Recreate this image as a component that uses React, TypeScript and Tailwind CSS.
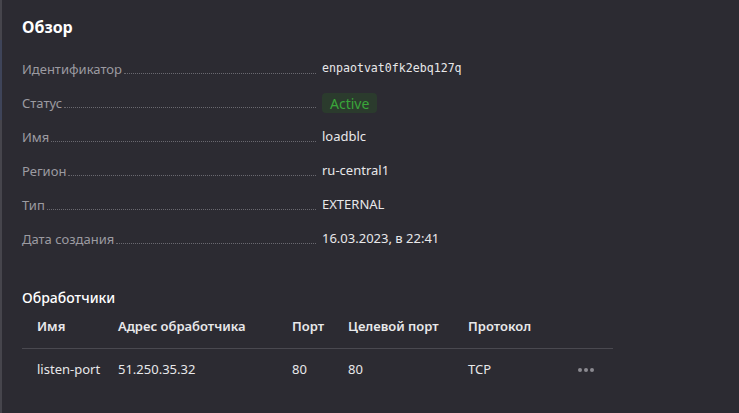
import React from "react";

const rows: { label: string; value: React.ReactNode }[] = [
  {
    label: "Идентификатор",
    value: (
      <span className="font-['DejaVu_Sans_Mono',monospace] text-[11.6px] text-[#e8e8ea]">
        enpaotvat0fk2ebq127q
      </span>
    ),
  },
  {
    label: "Статус",
    value: (
      <span className="inline-flex h-[20px] items-center rounded-[4px] bg-[#2b3b2d] px-[8px] text-[14px] text-[#3aa63a]">
        Active
      </span>
    ),
  },
  { label: "Имя", value: "loadblc" },
  { label: "Регион", value: "ru-central1" },
  { label: "Тип", value: "EXTERNAL" },
  { label: "Дата создания", value: "16.03.2023, в 22:41" },
];

const cols = ["w-[81px]", "w-[174px]", "w-[56px]", "w-[120px]", "w-[100px]"];

export default function App() {
  return (
    <div className="flex h-[413px] w-[739px] bg-[#2c2b32] font-['Noto_Sans',sans-serif] text-[13px] text-[#e8e8ea]">
      {/* left edge */}
      <div className="flex w-[2px] flex-col bg-[#46454c]">
        <div className="h-[40px]" />
        <div className="h-[80px] bg-[#3e4459]" />
      </div>

      <div className="flex-1 pl-[20px] pt-[14px]">
        <h2 className="text-[16px] font-bold leading-[26px] text-white">Обзор</h2>

        <div className="mt-[19px] flex flex-col">
          {rows.map((r) => (
            <div key={r.label} className="flex h-[34px] items-start">
              <div className="flex w-[296px] items-baseline leading-[20px]">
                <span className="text-[#9c9ba1]">{r.label}</span>
                <span className="mx-[2px] flex-1 border-b border-dotted border-[#6a6970]" />
              </div>
              <div className="ml-[4px] flex h-[20px] items-center">{r.value}</div>
            </div>
          ))}
        </div>

        <h3 className="mt-[25px] text-[14px] font-medium leading-[20px] text-white">Обработчики</h3>

        <div className="mt-[9px] w-[591px]">
          <div className="flex h-[32px] items-start border-b border-[#4a4950] pl-[15px] font-semibold leading-[18px]">
            {["Имя", "Адрес обработчика", "Порт", "Целевой порт", "Протокол"].map((h, i) => (
              <div key={h} className={cols[i]}>
                {h}
              </div>
            ))}
          </div>
          <div className="flex h-[42px] items-center pl-[15px]">
            {["listen-port", "51.250.35.32", "80", "80", "TCP"].map((c, i) => (
              <div key={i} className={cols[i]}>
                {c}
              </div>
            ))}
            <div className="ml-[10px] flex gap-[2px]">
              <span className="h-[4px] w-[4px] rounded-full bg-[#8b8a90]" />
              <span className="h-[4px] w-[4px] rounded-full bg-[#8b8a90]" />
              <span className="h-[4px] w-[4px] rounded-full bg-[#8b8a90]" />
            </div>
          </div>
        </div>
      </div>
    </div>
  );
}
